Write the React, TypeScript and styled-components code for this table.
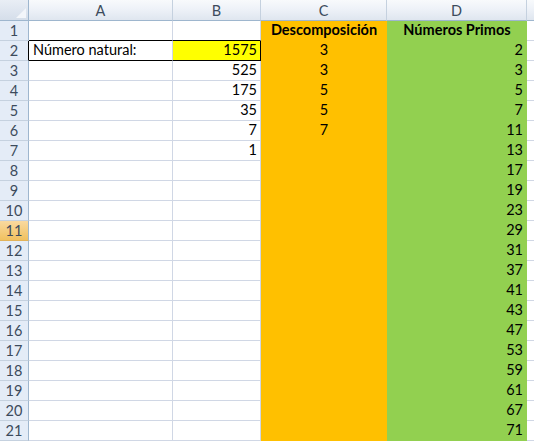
import React from "react";
import styled, { createGlobalStyle, css } from "styled-components";

const Global = createGlobalStyle`
  html, body { margin: 0; padding: 0; background: #ffffff; }
  body { font-family: Lato, "Liberation Sans", sans-serif; }
`;

const Sheet = styled.div`
  display: grid;
  grid-template-columns: 29px 144px 88px 126px 140px 1fr;
  grid-auto-rows: 20px;
  grid-template-rows: 21px;
  width: 534px;
  height: 443px;
  overflow: hidden;
  background: #fff;
  font-size: 14.5px;
  color: #000;
`;

const Corner = styled.div`
  position: relative;
  background: linear-gradient(#e9eef5, #d5deea);
  border-right: 1px solid #9eb6ce;
  border-bottom: 1px solid #9eb6ce;
  box-sizing: border-box;
`;

const Triangle = styled.svg`
  position: absolute;
  right: 2px;
  bottom: 2px;
`;

const ColHead = styled.div`
  display: flex;
  align-items: center;
  justify-content: center;
  box-sizing: border-box;
  background: linear-gradient(#f8fafc 0%, #eef2f8 45%, #dfe6ef 100%);
  border-right: 1px solid #c5d1df;
  border-bottom: 1px solid #9eb6ce;
  color: #3c4b5c;
  font-size: 14.5px;
`;

const RowHead = styled.div<{ $selected?: boolean; $dark?: boolean }>`
  display: flex;
  align-items: center;
  justify-content: center;
  box-sizing: border-box;
  background: #e4ecf7;
  border-right: 1px solid ${(p) => (p.$dark ? "#000" : "#9eb6ce")};
  border-bottom: 1px solid #c5d1df;
  color: #3c4b5c;
  font-size: 14.5px;
  ${(p) =>
    p.$selected &&
    css`
      background: linear-gradient(#f9d99f, #f1c15f);
      border-bottom-color: #e2b35a;
    `}
`;

type Align = "left" | "right" | "center";

const Cell = styled.div<{
  $fill?: string;
  $align?: Align;
  $bold?: boolean;
  $boxBottom?: boolean;
  $boxRight?: boolean;
}>`
  display: flex;
  align-items: flex-end;
  padding: 0 3px 1px 4px;
  box-sizing: border-box;
  white-space: nowrap;
  overflow: visible;
  background: ${(p) => p.$fill ?? "#fff"};
  border-right: 1px solid ${(p) => (p.$boxRight ? "#000" : p.$fill ?? "#d0d7e5")};
  border-bottom: 1px solid ${(p) => (p.$boxBottom ? "#000" : p.$fill ?? "#d0d7e5")};
  justify-content: ${(p) =>
    p.$align === "right" ? "flex-end" : p.$align === "center" ? "center" : "flex-start"};
  font-weight: ${(p) => (p.$bold ? 700 : 400)};
  line-height: 18px;
`;

const ORANGE = "#ffc000";
const GREEN = "#92d050";
const YELLOW = "#ffff00";

const primes = [2, 3, 5, 7, 11, 13, 17, 19, 23, 29, 31, 37, 41, 43, 47, 53, 59, 61, 67, 71];
const bVals: Record<number, number> = { 2: 1575, 3: 525, 4: 175, 5: 35, 6: 7, 7: 1 };
const cVals: Record<number, number> = { 2: 3, 3: 3, 4: 5, 5: 5, 6: 7 };

export default function App() {
  const rows = Array.from({ length: 21 }, (_, i) => i + 1);
  return (
    <>
      <Global />
      <Sheet>
        <Corner>
          <Triangle width="10" height="10" viewBox="0 0 10 10">
            <polygon points="10,0 10,10 0,10" fill="#f3f6fa" />
          </Triangle>
        </Corner>
        <ColHead>A</ColHead>
        <ColHead>B</ColHead>
        <ColHead>C</ColHead>
        <ColHead>D</ColHead>
        <ColHead />
        {rows.map((r) => (
          <React.Fragment key={r}>
            <RowHead $selected={r === 11} $dark={r === 2}>
              {r}
            </RowHead>
            <Cell $boxBottom={r === 1 || r === 2}>{r === 2 ? "Número natural:" : ""}</Cell>
            <Cell
              $align="right"
              $fill={r === 2 ? YELLOW : undefined}
              $boxBottom={r === 1 || r === 2}
              $boxRight={r === 2}
            >
              {bVals[r] ?? ""}
            </Cell>
            <Cell $fill={ORANGE} $align="center" $bold={r === 1}>
              {r === 1 ? "Descomposición" : cVals[r] ?? ""}
            </Cell>
            <Cell $fill={GREEN} $align={r === 1 ? "center" : "right"} $bold={r === 1}>
              {r === 1 ? "Números Primos" : primes[r - 2]}
            </Cell>
            <Cell />
          </React.Fragment>
        ))}
      </Sheet>
    </>
  );
}
